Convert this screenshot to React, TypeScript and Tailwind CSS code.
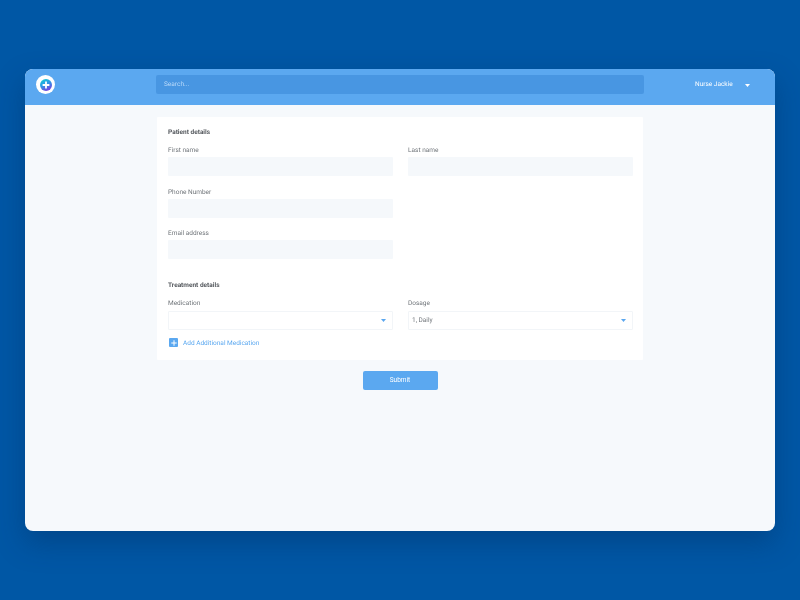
import { Plus } from 'lucide-react'

function Caret({ className }: { className: string }) {
  return (
    <svg width="5" height="3" viewBox="0 0 5 3" className={className}>
      <path d="M0 0h5L2.5 3z" fill="currentColor" />
    </svg>
  )
}

function Logo() {
  return (
    <div className="flex h-[19px] w-[19px] items-center justify-center rounded-full bg-white">
      <svg width="12" height="12" viewBox="0 0 12 12">
        <defs>
          <linearGradient id="logo" x1="0" y1="0" x2="0.5" y2="1">
            <stop offset="0" stopColor="#12d0d0" />
            <stop offset="0.5" stopColor="#2a9ee6" />
            <stop offset="1" stopColor="#7048e0" />
          </linearGradient>
        </defs>
        <circle cx="6" cy="6" r="6" fill="url(#logo)" />
        <path d="M5.1 2.6h1.8v2.5h2.5v1.8H6.9v2.5H5.1V6.9H2.6V5.1h2.5z" fill="#fff" />
      </svg>
    </div>
  )
}

function Field({ label }: { label: string }) {
  return (
    <div className="w-[225px]">
      <div className="mb-[1px] h-[12px] text-[6.5px] leading-[13px] text-[#70757a]">{label}</div>
      <div className="h-[19px] rounded-[1px] bg-[#f5f8fb]" />
    </div>
  )
}

function Select({ label, value }: { label: string; value?: string }) {
  return (
    <div className="w-[225px]">
      <div className="mb-[1.5px] h-[12px] text-[6.5px] leading-[13px] text-[#70757a]">{label}</div>
      <div className="flex h-[19px] items-center justify-between rounded-[1px] border border-[#f2f5f8] bg-white pr-[6px] pl-[3px] text-[6.5px] text-[#70757a]">
        <span className="pt-[1px]">{value}</span>
        <Caret className="text-[#5aa7ef]" />
      </div>
    </div>
  )
}

export default function App() {
  return (
    <div className="flex h-[600px] w-[800px] items-center justify-center overflow-hidden bg-[#0057a5] font-['Roboto',sans-serif] [text-rendering:geometricPrecision]">
      <div className="h-[462px] w-[750px] overflow-hidden rounded-[8px] bg-[#f6f9fc] shadow-[0_12px_28px_rgba(0,40,90,0.35)] [will-change:transform]">
        {/* Top bar */}
        <header className="flex h-[36px] items-start bg-[#5ba8f0] pt-[6px] pl-[11px]">
          <div className="w-[120px]">
            <Logo />
          </div>
          <div className="flex h-[19px] w-[488px] items-center rounded-[2px] bg-[#4896e2] px-[8px] pt-[1px] text-[6.5px] text-[#b9dafa]">
            Search...
          </div>
          <div className="ml-[51px] flex h-[19px] items-center pt-[1px] text-[6.5px] text-white">
            Nurse Jackie
            <Caret className="ml-[12px] text-white" />
          </div>
        </header>

        <main className="flex flex-col items-center pt-[12px]">
          <section className="h-[243px] w-[486px] rounded-[1px] bg-white pt-[9px] pr-[10px] pl-[11px]">
            <h2 className="mb-[7px] h-[11px] text-[6.5px] leading-[12px] font-bold text-[#55595e]">Patient details</h2>
            <div className="flex gap-[15px]">
              <Field label="First name" />
              <Field label="Last name" />
            </div>
            <div className="mt-[9.5px] flex flex-col gap-[9.5px]">
              <Field label="Phone Number" />
              <Field label="Email address" />
            </div>
            <h2 className="mt-[20px] mb-[7px] h-[11px] text-[6.5px] leading-[13px] font-bold text-[#55595e]">Treatment details</h2>
            <div className="flex gap-[15px]">
              <Select label="Medication" />
              <Select label="Dosage" value="1, Daily" />
            </div>
            <div className="mt-[8px] ml-[1px] flex items-center gap-[5px] text-[6.5px] text-[#5ba8f0]">
              <span className="flex h-[9px] w-[9px] items-center justify-center rounded-[1px] bg-[#5ba8f0]">
                <Plus size={8} strokeWidth={3} color="#fff" />
              </span>
              <span className="pt-[1px]">Add Additional Medication</span>
            </div>
          </section>
          <button className="mt-[11px] h-[19px] w-[75px] rounded-[2px] bg-[#5ba8f0] pt-[1px] text-[6.5px] text-white">Submit</button>
        </main>
      </div>
    </div>
  )
}
